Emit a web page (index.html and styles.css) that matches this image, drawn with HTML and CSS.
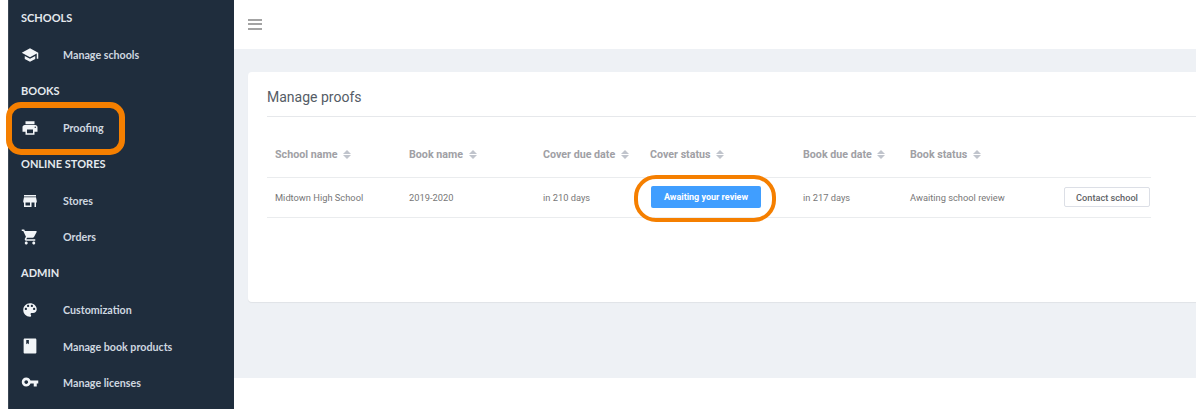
FILE: index.html
```html
<!DOCTYPE html>
<html lang="en">
<head>
    <meta charset="UTF-8">
    <title>Manage proofs</title>
    <link rel="stylesheet" href="styles.css">
</head>
<body>

    <div class="page">
        <nav class="sidebar">
            <div class="nav-title">SCHOOLS</div>
            <a class="nav-item">
                <svg class="nav-icon" viewBox="0 0 24 24"><path d="M5 13.18v4L12 21l7-3.82v-4L12 17l-7-3.82zM12 3L1 9l11 6 9-4.91V17h2V9L12 3z"/></svg>
                Manage schools
            </a>
            <div class="nav-title">BOOKS</div>
            <a class="nav-item">
                <svg class="nav-icon" viewBox="0 0 24 24"><path d="M19 8H5c-1.66 0-3 1.34-3 3v6h4v4h12v-4h4v-6c0-1.66-1.34-3-3-3zm-3 11H8v-5h8v5zm3-7c-.55 0-1-.45-1-1s.45-1 1-1 1 .45 1 1-.45 1-1 1zm-1-9H6v4h12V3z"/></svg>
                Proofing
            </a>
            <div class="nav-title">ONLINE STORES</div>
            <a class="nav-item">
                <svg class="nav-icon" viewBox="0 0 24 24"><path d="M20 4H4v2h16V4zm1 10v-2l-1-5H4l-1 5v2h1v6h10v-6h4v6h2v-6h1zm-9 4H6v-4h6v4z"/></svg>
                Stores
            </a>
            <a class="nav-item">
                <svg class="nav-icon" viewBox="0 0 24 24"><path d="M7 18c-1.1 0-1.99.9-1.99 2S5.9 22 7 22s2-.9 2-2-.9-2-2-2zM1 2v2h2l3.6 7.59-1.35 2.45c-.16.28-.25.61-.25.96 0 1.1.9 2 2 2h12v-2H7.42c-.14 0-.25-.11-.25-.25l.03-.12.9-1.63h7.45c.75 0 1.41-.41 1.75-1.03l3.58-6.49c.08-.14.12-.31.12-.48 0-.55-.45-1-1-1H5.21l-.94-2H1zm16 16c-1.1 0-1.99.9-1.99 2s.89 2 1.99 2 2-.9 2-2-.9-2-2-2z"/></svg>
                Orders
            </a>
            <div class="nav-title">ADMIN</div>
            <a class="nav-item">
                <svg class="nav-icon" viewBox="0 0 24 24"><path d="M12 3c-4.97 0-9 4.03-9 9s4.03 9 9 9c.83 0 1.5-.67 1.5-1.5 0-.39-.15-.74-.39-1.01-.23-.26-.38-.61-.38-.99 0-.83.67-1.5 1.5-1.5H16c2.76 0 5-2.24 5-5 0-4.42-4.03-8-9-8zm-5.5 9c-.83 0-1.5-.67-1.5-1.5S5.67 9 6.5 9 8 9.67 8 10.5 7.33 12 6.5 12zm3-4C8.67 8 8 7.33 8 6.5S8.67 5 9.5 5s1.5.67 1.5 1.5S10.33 8 9.5 8zm5 0c-.83 0-1.5-.67-1.5-1.5S13.67 5 14.5 5s1.5.67 1.5 1.5S15.33 8 14.5 8zm3 4c-.83 0-1.5-.67-1.5-1.5S16.67 9 17.5 9s1.5.67 1.5 1.5-.67 1.5-1.5 1.5z"/></svg>
                Customization
            </a>
            <a class="nav-item">
                <svg class="nav-icon" viewBox="0 0 24 24"><path d="M19 2H5c-.7 0-1.5.7-1.5 1.5v17c0 .8.8 1.5 1.5 1.5h14c.7 0 1.5-.7 1.5-1.5v-17C20.500 2.700 19.700 2 19 2zM7 4h3.500v5.500L8.750 8.300 7 9.500V4z"/></svg>
                Manage book products
            </a>
            <a class="nav-item">
                <svg class="nav-icon" viewBox="0 0 24 24"><path d="M12.65 10C11.83 7.67 9.61 6 7 6c-3.31 0-6 2.69-6 6s2.69 6 6 6c2.61 0 4.83-1.67 5.65-4H17v4h4v-4h2v-4H12.650zM7 14.500c-1.380 0-2.500-1.120-2.500-2.500S5.620 9.500 7 9.500s2.500 1.120 2.500 2.500-1.120 2.500-2.500 2.500z"/></svg>
                Manage licenses
            </a>
        </nav>

        <div class="main">
            <header class="topbar">
                <div class="hamburger"><span></span><span></span><span></span></div>
            </header>
            <section class="content">
                <div class="card">
                    <h2 class="card-title">Manage proofs</h2>
                    <table class="proofs">
                        <colgroup>
                            <col class="col-school">
                            <col class="col-book">
                            <col class="col-cover-date">
                            <col class="col-cover-status">
                            <col class="col-book-date">
                            <col class="col-book-status">
                            <col class="col-action">
                        </colgroup>
                        <thead>
                            <tr>
                                <th>School name <i class="sort"></i></th>
                                <th>Book name <i class="sort"></i></th>
                                <th>Cover due date <i class="sort"></i></th>
                                <th>Cover status <i class="sort"></i></th>
                                <th>Book due date <i class="sort"></i></th>
                                <th>Book status <i class="sort"></i></th>
                                <th></th>
                            </tr>
                        </thead>
                        <tbody>
                            <tr>
                                <td>Midtown High School</td>
                                <td>2019-2020</td>
                                <td>in 210 days</td>
                                <td><button class="btn-review">Awaiting your review</button></td>
                                <td>in 217 days</td>
                                <td>Awaiting school review</td>
                                <td class="action"><button class="btn-contact">Contact school</button></td>
                            </tr>
                        </tbody>
                    </table>
                </div>
            </section>
        </div>
    </div>

    <!-- orange callouts drawn over the screenshot -->
    <div class="callout callout-nav"></div>
    <div class="callout callout-status"></div>

</body>
</html>
```

FILE: styles.css
```css
* {
    box-sizing: border-box;
}
html, body {
    margin: 0;
    height: 409px;
    overflow: hidden;
    background: #fff;
}
body {
    font-family: Roboto, sans-serif;
}
.page {
    display: flex;
    height: 409px;
    padding-left: 8px;
    align-items: flex-start;
}

/* sidebar */
.sidebar {
    width: 226px;
    height: 409px;
    flex-shrink: 0;
    padding-top: 0.4px;
    background: #1f2d3d;
    border-left: 1px solid #3a4654;
    font-family: Lato, sans-serif;
}
.nav-title {
    height: 36.4px;
    line-height: 36.4px;
    padding-left: 12px;
    font-size: 11px;
    font-weight: 700;
    color: #e4e9ee;
}
.nav-item {
    display: flex;
    align-items: center;
    height: 36.4px;
    padding-left: 12px;
    font-size: 10.7px;
    font-weight: 700;
    color: #cfd8e0;
}
.nav-icon {
    width: 18px;
    height: 18px;
    margin-right: 24px;
    flex-shrink: 0;
    fill: #f2f5f8;
}

/* main */
.main {
    flex: 1;
    min-width: 0;
    height: 378px;
    display: flex;
    flex-direction: column;
}
.topbar {
    height: 49px;
    flex-shrink: 0;
    background: #fff;
    display: flex;
    align-items: center;
    padding-left: 14px;
}
.hamburger {
    width: 14px;
    display: flex;
    flex-direction: column;
    gap: 2.5px;
    margin-top: -1px;
}
.hamburger span {
    display: block;
    height: 2px;
    background: #a3a3a3;
}
.content {
    flex: 1;
    background: #eef1f5;
    padding: 23px 0 0 14px;
    overflow: hidden;
}
.card {
    width: 960px;
    height: 230px;
    background: #fff;
    border-radius: 4px;
    box-shadow: 0 1px 1px rgba(0, 0, 0, 0.06);
    padding: 0 0 0 19px;
}
.card-title {
    margin: 0;
    height: 45px;
    line-height: 50px;
    font-size: 14px;
    font-weight: 400;
    color: #555c66;
    border-bottom: 1px solid #e6e8eb;
}

/* table */
.proofs {
    width: 884px;
    table-layout: fixed;
    border-collapse: collapse;
    margin-top: 14px;
}
.col-school, .col-book { width: 134px; }
.col-cover-date { width: 107px; }
.col-cover-status { width: 153px; }
.col-book-date { width: 107px; }
.col-book-status { width: 154px; }
.proofs th {
    height: 46px;
    padding: 1px 0 0 8px;
    text-align: left;
    font-size: 10.7px;
    font-weight: 700;
    color: #a0a0a5;
    border-bottom: 1px solid #eaecee;
}
.proofs td {
    height: 40px;
    padding: 0 0 0 8px;
    font-size: 9.3px;
    color: #777;
    border-bottom: 1px solid #eaecee;
}
.proofs td.action {
    padding: 0 0 0 8px;
}
.sort {
    display: inline-block;
    position: relative;
    width: 8px;
    height: 9px;
    margin-left: 3px;
    vertical-align: -1px;
}
.sort::before, .sort::after {
    content: "";
    position: absolute;
    left: 0;
    border-left: 4px solid transparent;
    border-right: 4px solid transparent;
}
.sort::before {
    top: 0;
    border-bottom: 4px solid #c0c4cc;
}
.sort::after {
    bottom: 0;
    border-top: 4px solid #c0c4cc;
}
.btn-review {
    display: block;
    width: 110px;
    height: 22px;
    padding: 0;
    margin-left: 1px;
    border: none;
    border-radius: 2px;
    background: #409eff;
    color: #fff;
    font-family: Roboto, sans-serif;
    font-size: 9px;
    font-weight: 700;
}
.btn-contact {
    display: block;
    width: 86px;
    height: 20px;
    padding: 0;
    background: #fff;
    border: 1px solid #dcdfe6;
    border-radius: 2px;
    color: #606266;
    font-family: Roboto, sans-serif;
    font-size: 9.2px;
    font-weight: 500;
}

/* orange callouts */
.callout {
    position: absolute;
    border: 6px solid #f57f00;
}
.callout-nav {
    left: 6px;
    top: 102px;
    width: 119px;
    height: 53px;
    border-radius: 15px;
}
.callout-status {
    left: 634px;
    top: 175px;
    width: 142px;
    height: 47px;
    border-width: 4px;
    border-radius: 22px;
}
```
